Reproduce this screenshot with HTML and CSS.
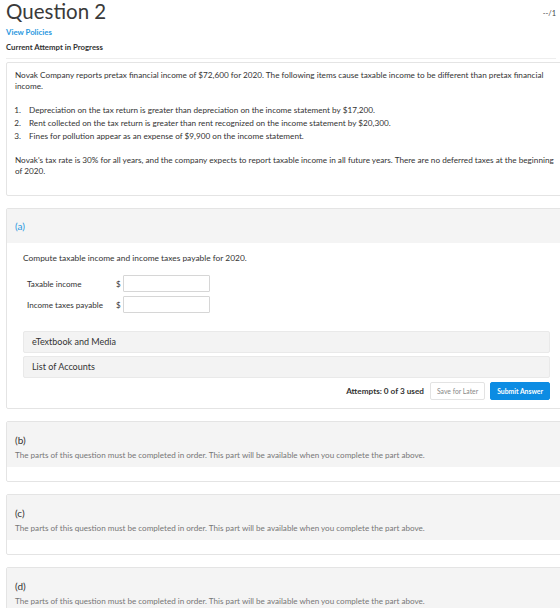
FILE: index.html
```html
<!DOCTYPE html>
<html>
  <head>
    <meta name="viewport" content="width=device-width,initial-scale=1.0">
    <title>Question 2</title>
    <link rel="stylesheet" href="styles.css">
  </head>
  <body>
    <div id="page">
      <div class="top">
        <h1 class="title">Question 2</h1>
        <span class="score">--/1</span>
      </div>
      <a class="policies" href="#">View Policies</a>
      <div class="attempt">Current Attempt in Progress</div>

      <div class="box stem">
        <p>Novak Company reports pretax financial income of $72,600 for 2020. The following items cause taxable income to be different than pretax financial income.</p>
        <ol>
          <li>Depreciation on the tax return is greater than depreciation on the income statement by $17,200.</li>
          <li>Rent collected on the tax return is greater than rent recognized on the income statement by $20,300.</li>
          <li>Fines for pollution appear as an expense of $9,900 on the income statement.</li>
        </ol>
        <p class="rate">Novak's tax rate is 30% for all years, and the company expects to report taxable income in all future years. There are no deferred taxes at the beginning of 2020.</p>
      </div>

      <div class="box part">
        <div class="part-head active">(a)</div>
        <div class="part-body">
          <p>Compute taxable income and income taxes payable for 2020.</p>
          <div class="answers">
            <label class="row"><span class="lbl">Taxable income</span><span class="cur">$</span><input type="text"></label>
            <label class="row"><span class="lbl">Income taxes payable</span><span class="cur">$</span><input type="text"></label>
          </div>
          <div class="drawer">eTextbook and Media</div>
          <div class="drawer">List of Accounts</div>
          <div class="actions">
            <span class="used">Attempts: 0 of 3 used</span>
            <button class="later">Save for Later</button>
            <button class="submit">Submit Answer</button>
          </div>
        </div>
      </div>

      <div class="box part">
        <div class="part-head">(b)
          <div class="locked">The parts of this question must be completed in order. This part will be available when you complete the part above.</div>
        </div>
        <div class="part-foot"></div>
      </div>

      <div class="box part">
        <div class="part-head">(c)
          <div class="locked">The parts of this question must be completed in order. This part will be available when you complete the part above.</div>
        </div>
        <div class="part-foot"></div>
      </div>

      <div class="box part">
        <div class="part-head">(d)
          <div class="locked">The parts of this question must be completed in order. This part will be available when you complete the part above.</div>
        </div>
        <div class="part-foot"></div>
      </div>
    </div>
  </body>
</html>
```

FILE: styles.css
```css
html, body { overflow: hidden; }
body { margin: 0; font-family: Lato, "Open Sans", sans-serif; color: #333; font-size: 8.2px; background: #fff; }
#page { padding: 0 4px 0 6px; }

.top { display: flex; justify-content: space-between; align-items: flex-start; }
.title { margin: 0; font-size: 20.5px; font-weight: 400; line-height: 23px; color: #3a3a3a; }
.score { font-size: 7.5px; margin-top: 9px; color: #444; }
.policies { display: block; margin-top: 4px; color: #2a98e0; text-decoration: none; font-size: 7.8px; font-weight: 700; line-height: 11px; }
.attempt { font-weight: 700; font-size: 7.8px; margin-top: 4px; line-height: 11px; padding-bottom: 5px; border-bottom: 1px solid #eee; }

.box { border: 1px solid #e4e4e4; border-radius: 2px; margin-right: -11px; background: #fff; }

.stem { margin-top: 3px; padding: 7px 8px 18px 8px; }
.stem p { margin: 0; line-height: 11px; }
.stem ol { margin: 12px 0 12px 0; padding-left: 8px; }
.stem li { line-height: 13px; padding-left: 6px; }

.part { margin-top: 12px; }
.part-head { background: #f4f4f4; padding: 11px 8px 6px 8px; font-size: 10px; line-height: 14px; color: #333; }
.part-head.active { color: #2a98e0; padding: 10px 8px 10px 8px; }
.locked { font-size: 8.1px; color: #777; line-height: 11px; margin-top: 3px; }
.part-foot { height: 14px; }

.part-body { padding: 10px 16px 8px 16px; }
.part-body p { margin: 0; line-height: 11px; font-size: 8.4px; }
.answers { margin: 11px 0 18px 4px; display: flex; flex-direction: column; gap: 4px; }
.row { display: flex; align-items: center; }
.lbl { width: 89px; font-size: 8.1px; }
.cur { width: 7px; font-size: 8px; }
.row input { width: 85px; height: 15px; border: 1px solid #d6d6d6; border-radius: 1px; padding: 0; margin: 0; }

.drawer { background: #f3f3f3; border: 1px solid #e9e9e9; border-radius: 2px; height: 20px; line-height: 20px; padding-left: 8px; font-size: 9px; color: #333; margin-bottom: 3px; }

.actions { display: flex; justify-content: flex-end; align-items: center; gap: 5px; margin-top: 4px; }
.used { font-weight: 700; font-size: 8.2px; margin-right: 1px; }
.actions button { font-family: inherit; height: 18px; border-radius: 2px; font-size: 6.8px; padding: 0 6px; }
.later { background: #fff; border: 1px solid #e3e3e3; color: #888; }
.submit { background: #0c8ce3; border: 1px solid #0c8ce3; color: #fff; font-weight: 700; }
```
